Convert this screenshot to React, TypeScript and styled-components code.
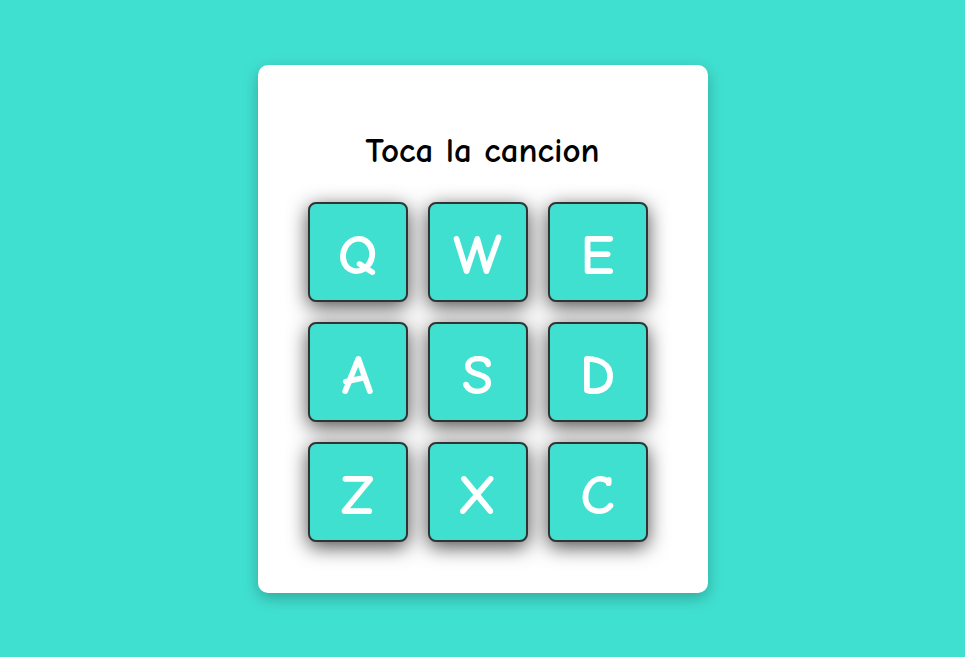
import React from "react";
import styled, { createGlobalStyle } from "styled-components";

const Global = createGlobalStyle`
  html, body { margin: 0; padding: 0; }
  body {
    background: #40e0d0;
    font-family: "Comic Sans MS", "Comic Neue", "Noto Sans", sans-serif;
    min-height: 657px;
  }
`;

const Page = styled.main`
  display: flex;
  justify-content: center;
  padding-top: 65px;
`;

const Card = styled.section`
  width: 450px;
  box-sizing: border-box;
  background: #ffffff;
  border-radius: 10px;
  box-shadow: 0 5px 15px rgba(0, 0, 0, 0.25);
  padding: 50px 60px 51px 50px;
  display: flex;
  flex-direction: column;
  align-items: center;
`;

const Title = styled.h1`
  margin: 14px 0 29px 10px;
  font-size: 35px;
  line-height: 44px;
  font-weight: 700;
  color: #000;
`;

const Grid = styled.div`
  display: grid;
  grid-template-columns: repeat(3, 100px);
  grid-auto-rows: 100px;
  gap: 20px;
`;

const Key = styled.button`
  box-sizing: border-box;
  width: 100px;
  height: 100px;
  background: #40e0d0;
  border: 2px solid #333;
  border-radius: 8px;
  box-shadow: 0 5px 20px rgba(0, 0, 0, 0.7);
  color: #fff;
  font-family: inherit;
  font-size: 57px;
  font-weight: 700;
  display: flex;
  align-items: center;
  justify-content: center;
  padding: 6px 0 0;
  cursor: pointer;
`;

const keys = ["Q", "W", "E", "A", "S", "D", "Z", "X", "C"];

export default function App() {
  return (
    <>
      <Global />
      <Page>
        <Card>
          <Title>Toca la cancion</Title>
          <Grid>
            {keys.map((k) => (
              <Key key={k}>{k}</Key>
            ))}
          </Grid>
        </Card>
      </Page>
    </>
  );
}
